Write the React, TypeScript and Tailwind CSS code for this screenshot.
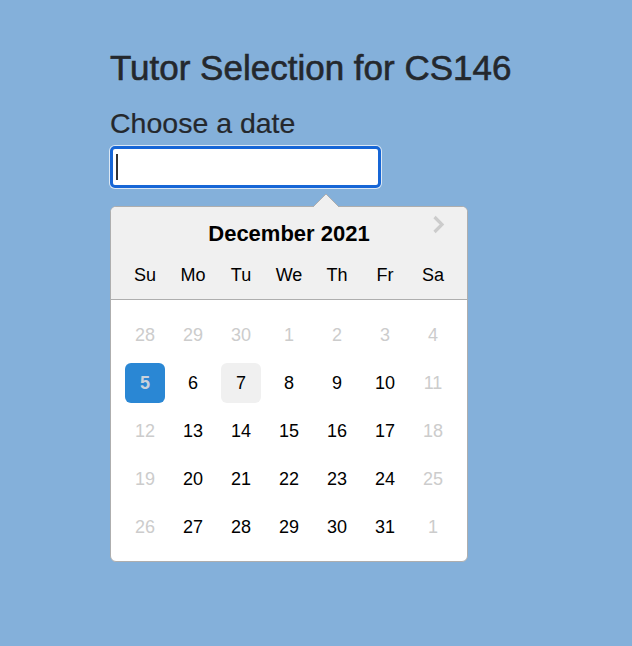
import React from "react";

type Day = { n: number; dis?: boolean; sel?: boolean; hov?: boolean };

const weeks: Day[][] = [
  [28, 29, 30, 1, 2, 3, 4].map((n) => ({ n, dis: true })),
  [
    { n: 5, sel: true },
    { n: 6 },
    { n: 7, hov: true },
    { n: 8 },
    { n: 9 },
    { n: 10 },
    { n: 11, dis: true },
  ],
  [
    { n: 12, dis: true },
    { n: 13 },
    { n: 14 },
    { n: 15 },
    { n: 16 },
    { n: 17 },
    { n: 18, dis: true },
  ],
  [
    { n: 19, dis: true },
    { n: 20 },
    { n: 21 },
    { n: 22 },
    { n: 23 },
    { n: 24 },
    { n: 25, dis: true },
  ],
  [
    { n: 26, dis: true },
    { n: 27 },
    { n: 28 },
    { n: 29 },
    { n: 30 },
    { n: 31 },
    { n: 1, dis: true },
  ],
];

const names = ["Su", "Mo", "Tu", "We", "Th", "Fr", "Sa"];

export default function App() {
  return (
    <div className="min-h-screen w-full bg-[#84b0da] font-['Liberation_Sans',Arial,sans-serif]">
      <div className="pl-[110px] pt-[48px] pb-[40px]">
        <h1 className="text-[35px] leading-[40px] text-[#24282d] whitespace-nowrap [-webkit-text-stroke:0.6px_#24282d]">
          Tutor Selection for CS146
        </h1>
        <div className="mt-[18px] text-[28.5px] leading-[34px] text-[#24282d] whitespace-nowrap [-webkit-text-stroke:0.2px_#24282d]">
          Choose a date
        </div>
        <div className="mt-[6px] w-[271px] h-[42px] border-[3px] border-[#1766d6] rounded-[5px] bg-white shadow-[0_0_0_1px_#dce8f4] flex items-center pl-[3px]">
          <div className="w-[2px] h-[26px] bg-[#333333]" />
        </div>

        <div className="relative mt-[18px] w-[358px] border border-[#aeaeae] rounded-[6px] bg-white text-black">
          <svg
            className="absolute left-[202px] top-[-14px]"
            width="26"
            height="15"
            viewBox="0 0 26 15"
          >
            <polygon points="0,14 13,1 26,14" fill="#f0f0f0" />
            <polyline
              points="0,14 13,1 26,14"
              fill="none"
              stroke="#aeaeae"
              strokeWidth="1"
            />
            <rect x="0" y="14" width="26" height="1" fill="#f0f0f0" />
          </svg>
          <svg
            className="absolute left-[320px] top-[8px]"
            width="16"
            height="20"
            viewBox="0 0 16 20"
          >
            <polyline
              points="3.5,2 11,9.5 3.5,17"
              fill="none"
              stroke="#cccccc"
              strokeWidth="3.2"
            />
          </svg>

          <div className="rounded-t-[5px] bg-[#f0f0f0] border-b border-[#aeaeae] pt-[14px] pb-[4px]">
            <div className="text-center font-bold text-[22px] leading-[26px]">
              December 2021
            </div>
            <div className="mt-[8px] grid grid-cols-7 px-[10px]">
              {names.map((d) => (
                <div
                  key={d}
                  className="h-[40px] leading-[40px] text-center text-[18px]"
                >
                  {d}
                </div>
              ))}
            </div>
          </div>

          <div className="px-[10px] pt-[11px] pb-[10px] grid grid-cols-7">
            {weeks.flat().map((d, i) => (
              <div key={i} className="h-[48px] flex items-center justify-center">
                <span
                  className={
                    "w-[40px] h-[40px] leading-[40px] rounded-[6px] text-center text-[18px] " +
                    (d.sel
                      ? "bg-[#2a87d4] text-[#c9d2db] font-bold"
                      : d.hov
                      ? "bg-[#f0f0f0] text-black"
                      : d.dis
                      ? "text-[#cccccc]"
                      : "text-black")
                  }
                >
                  {d.n}
                </span>
              </div>
            ))}
          </div>
        </div>
      </div>
    </div>
  );
}
